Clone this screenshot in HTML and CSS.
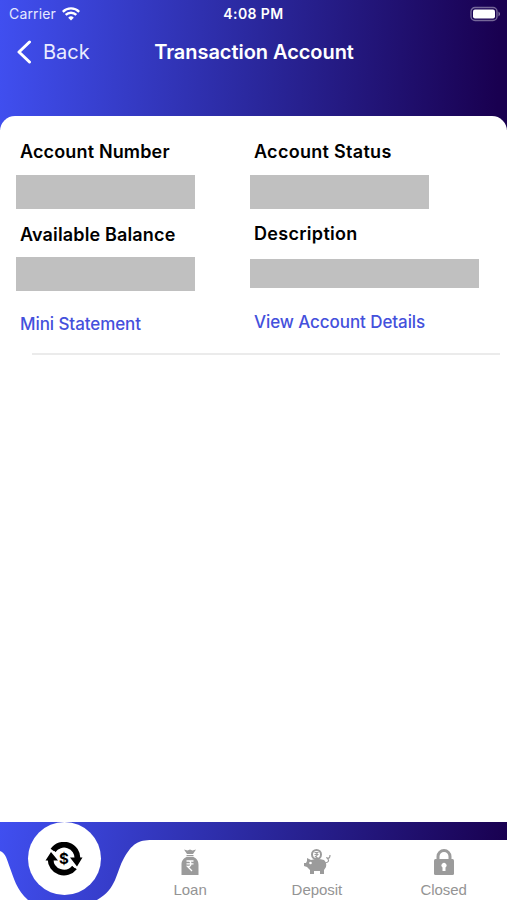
FILE: index.html
```html
<!DOCTYPE html>
<html lang="en">
<head>
<meta charset="utf-8">
<title>Transaction Account</title>
<link rel="stylesheet" href="styles.css">
</head>
<body>
<div class="app">
  <header class="header">
    <div class="status">
      <div class="carrier"><span>Carrier</span>
        <svg width="18" height="14" viewBox="0 0 18 14" fill="none" stroke="#fff" stroke-width="2.4"><path d="M.8 4.8a11.6 11.6 0 0 1 16.4 0M3.7 7.9a7.5 7.5 0 0 1 10.6 0"/><path d="M9 13.6 6.2 10.7a4 4 0 0 1 5.6 0z" fill="#fff" stroke="none"/></svg>
      </div>
      <div class="clock">4:08 PM</div>
      <svg class="battery" width="32" height="16" viewBox="0 0 32 16"><rect x="2" y="1.500" width="26" height="13" rx="4" fill="none" stroke="#fff" stroke-opacity=".4" stroke-width="1.4"/><rect x="4" y="3.500" width="22" height="9" rx="2" fill="#fff"/><path d="M29.500 5.500q3 2.500 0 5z" fill="#fff" fill-opacity=".5"/></svg>
    </div>
    <nav class="nav">
      <a class="back"><svg width="16" height="24" viewBox="0 0 16 24" fill="none" stroke="#fff" stroke-width="3" stroke-linecap="round" stroke-linejoin="round"><path d="M13.500 2 3 12l10.500 10"/></svg><span>Back</span></a>
      <h1 class="title">Transaction Account</h1>
    </nav>
  </header>
  <main class="sheet">
    <section class="account">
      <div class="column">
        <h2 class="label number">Account Number</h2>
        <div class="value"></div>
        <h2 class="label balance">Available Balance</h2>
        <div class="value second-value"></div>
        <a class="link mini">Mini Statement</a>
      </div>
      <div class="column">
        <h2 class="label state">Account Status</h2>
        <div class="value"></div>
        <h2 class="label description">Description</h2>
        <div class="value wide"></div>
        <a class="link details">View Account Details</a>
      </div>
    </section>
    <hr class="divider">
  </main>
  <footer class="tabbar">
    <svg class="curve" width="507" height="78" viewBox="0 0 507 78"><path d="M0 29C6 31 7 38 10 46S17 69 28 78H0zM97 78C117 67 116 50 124 36S138 18 152 18H507V78z" fill="#fff"/></svg>
    <div class="active">
      <svg class="cycle" width="38" height="34" viewBox="0 0 38 34"><g fill="none" stroke="#000" stroke-width="5.800"><path d="M8 8.500A13.400 13.400 0 0 1 32.400 17"/><path d="M29.500 25.500A13.400 13.400 0 0 1 5.600 17"/></g><path d="M.5 18.500 6 10l7 8.500zM25 15.500h12.500L32 24.500z"/><path d="M9 9.500 12 13M26 21.500l4 4" stroke="#fff" stroke-width="1.200"/><text x="19" y="22" text-anchor="middle" class="dollar">$</text></svg>
    </div>
    <a class="tab">
      <svg width="20" height="28" viewBox="0 0 20 28" fill="#9b9b9b"><path d="M4 1.500 7.500 2.500 10 1.500l2.500 1L16 1.500 13 6H7zM6.500 7h7v1.300h-7zM6.500 9h7c4 2 5 4.500 5 8v10h-17V17c0-3.500 1-6 5-8z"/><path d="M6.500 13h7M6.500 15.800h7M7.500 13h2q3 3 0 5.500h-2l4.500 4.500" fill="none" stroke="#fff" stroke-width="1.300"/></svg>
      <span>Loan</span>
    </a>
    <a class="tab">
      <svg width="28" height="28" viewBox="0 0 28 28"><circle cx="13.500" cy="6.500" r="4.500" fill="#fff" stroke="#9b9b9b" stroke-width="2"/><path d="M11.500 4.500h4M11.500 6.500h4M12.500 4.500q4 2 0 4l2.500 2" fill="none" stroke="#9b9b9b" stroke-width="1.100"/><path d="M4 13V10L8 12Q15 10 21 12q3 3 2 7l-2 3v4h-4v-3h-6v3H7v-4l-3-3-3-1v-3h2z" fill="#9b9b9b"/><circle cx="7.500" cy="15" r="1.300" fill="#fff"/><path d="M22 15q5-1 3-4-2-2-1-1 3 1 3-3" fill="none" stroke="#9b9b9b" stroke-width="1.200"/></svg>
      <span>Deposit</span>
    </a>
    <a class="tab">
      <svg width="22" height="28" viewBox="0 0 22 28"><path d="M5 12V8.500a6 6 0 0 1 12 0V12" fill="none" stroke="#9b9b9b" stroke-width="3"/><rect x="1" y="11" width="20" height="16" rx="1.500" fill="#9b9b9b"/><path d="M9.500 23v-3.500a2.500 2.500 0 1 1 3 0V23z" fill="#fff"/></svg>
      <span>Closed</span>
    </a>
  </footer>
</div>
</body>
</html>
```

FILE: styles.css
```css
* { box-sizing: border-box; }
body { margin: 0; background: #fff; font-family: Inter, "Liberation Sans", sans-serif; }
.app { width: 507px; height: 900px; display: flex; flex-direction: column; overflow: hidden; }
.header { background: linear-gradient(92deg, #404ff0 0%, #2a279c 51%, #190050 98%); }
.tabbar { background: linear-gradient(100deg, #404ff0 0%, #2a279c 51%, #190050 98%); }
.header { height: 130px; flex: none; color: #fff; }
.status { height: 27px; display: grid; grid-template-columns: 1fr auto 1fr; align-items: center; padding: 0 6px 0 9px; }
.carrier { display: flex; align-items: center; gap: 6px; font-size: 14px; letter-spacing: .15px; color: #e5e8ff; }
.clock { font-size: 14px; font-weight: 600; letter-spacing: .4px; margin-right: 3px; }
.battery { justify-self: end; }
.nav { height: 50px; display: grid; grid-template-columns: 1fr auto 1fr; align-items: center; padding: 0 16px; }
.back { display: flex; align-items: center; gap: 11px; font-size: 20px; color: #e9ecff; }
.title { margin: 0 0 0 1px; font-size: 20px; font-weight: 600; letter-spacing: -.05px; }
.sheet { flex: 1; margin-top: -14.500px; background: #fff; border-radius: 15px 15px 0 0; }
.account { display: grid; grid-template-columns: 234px 1fr; padding: 24px 0 0 16px; height: 237px; }
.column { display: flex; flex-direction: column; align-items: flex-start; }
.label, .link { margin: 0 0 0 4px; font-size: 18px; line-height: 24px; white-space: nowrap; }
.label { font-weight: 600; letter-spacing: .15px; color: #000; }
.state, .description { letter-spacing: .3px; }
.link { font-size: 17px; font-weight: 500; letter-spacing: -.08px; color: #4450dc; }
.value { width: 179px; height: 34px; margin-top: 11px; background: #c0c0c0; }
.second-value { margin-top: 10px; }
.wide { width: 229px; height: 29px; margin-top: 13px; }
.balance { margin-top: 14px; }
.description { margin-top: 13px; }
.mini { margin-top: 21px; }
.details { margin-top: 22px; }
.divider { height: 2px; margin: 0 7px 0 32px; border: 0; background: #ebebeb; }
.tabbar { position: relative; flex: none; height: 78px; display: grid; grid-template-columns: repeat(4, 1fr); }
.curve { position: absolute; inset: 0; }
.active { position: relative; width: 73px; height: 73px; margin-left: 27.500px; border-radius: 50%; background: #fff; display: grid; place-items: center; }
.dollar { font: 700 15px Inter, sans-serif; }
.tab { position: relative; display: flex; flex-direction: column; align-items: center; padding-top: 26px; color: #949494; font: 15px/18px "Liberation Sans", sans-serif; }
.tab span { margin-top: 5px; letter-spacing: -.05px; }
```
